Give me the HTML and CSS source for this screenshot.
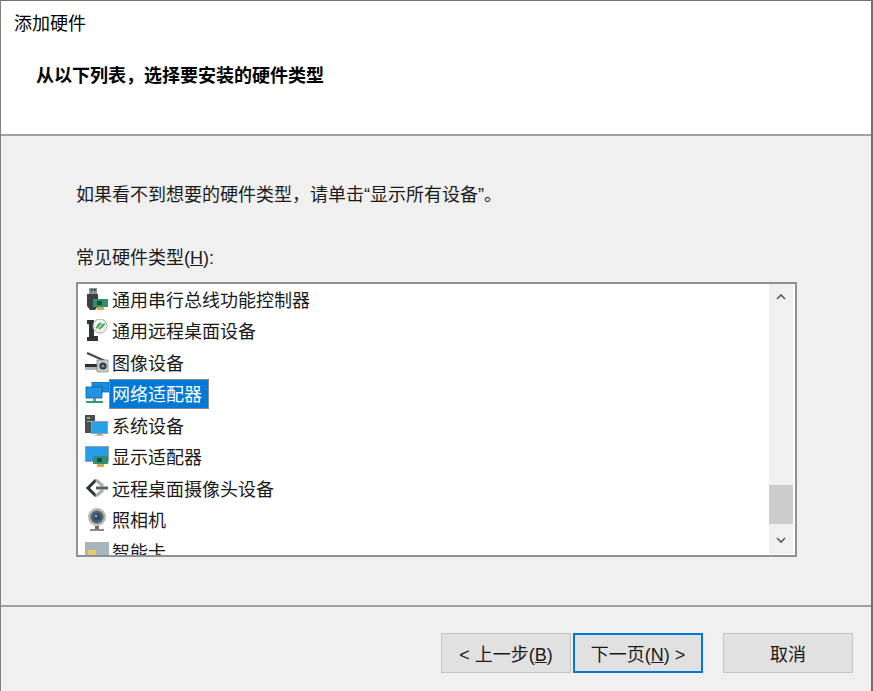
FILE: index.html
```html
<!DOCTYPE html>
<html lang="zh-CN">
<head>
    <meta charset="utf-8">
    <title>添加硬件</title>
    <link rel="stylesheet" href="styles.css">
</head>
<body>
    <div class="dialog">
        <div class="header">
            <div class="title">添加硬件</div>
            <div class="subtitle">从以下列表，选择要安装的硬件类型</div>
        </div>
        <div class="content">
            <p class="hint">如果看不到想要的硬件类型，请单击“显示所有设备”。</p>
            <p class="list-label">常见硬件类型(<u>H</u>):</p>
            <div class="listbox">
                <ul class="items">
                    <li class="item">
                        <svg class="icon" viewBox="0 0 24 24"><rect x="4" y="0" width="8" height="6" fill="#8c9294"/><rect x="6" y="1" width="1.5" height="2" fill="#333"/><rect x="9" y="1" width="1.5" height="2" fill="#333"/><path d="M2 6h11v12l-3 4H5l-3-4z" fill="#3b4042"/><rect x="8" y="11" width="15" height="8" fill="#2f8f70"/><rect x="12" y="13" width="5" height="4" fill="#14513f"/><rect x="12" y="19" width="7" height="3" fill="#e2a93a"/></svg>
                        <span class="name">通用串行总线功能控制器</span>
                    </li>
                    <li class="item">
                        <svg class="icon" viewBox="0 0 24 24"><path d="M2 1h7v16h4v5H2v-4h2V5H2z" fill="#2f3436"/><circle cx="15" cy="7" r="7" fill="#eef1ee" stroke="#a8adad"/><path d="M11 9l3-2-1-1 3-2M14 10l4-3-1-1 3-1" stroke="#3da24d" stroke-width="1.6" fill="none"/></svg>
                        <span class="name">通用远程桌面设备</span>
                    </li>
                    <li class="item">
                        <svg class="icon" viewBox="0 0 24 24"><path d="M2 2l18 8" stroke="#4a4a4a" stroke-width="2.4" fill="none"/><rect x="0" y="13" width="12" height="3" fill="#2f2f2f"/><rect x="0" y="16" width="12" height="3" fill="#b5b5b5"/><rect x="12" y="9" width="11" height="12" fill="#c9cccd" stroke="#777" stroke-width=".6"/><circle cx="18" cy="15" r="3.6" fill="#2d3a41"/><circle cx="18" cy="15" r="1.6" fill="#7f9cab"/></svg>
                        <span class="name">图像设备</span>
                    </li>
                    <li class="item">
                        <svg class="icon" viewBox="0 0 24 24"><rect x="7" y="0" width="17" height="10" fill="#1c8bdc" stroke="#0d5f9e" stroke-width=".8"/><rect x="1" y="5" width="16" height="11" fill="#1f93e6" stroke="#0d5f9e" stroke-width=".8"/><rect x="8" y="16" width="3" height="3" fill="#7d8b8b"/><rect x="1" y="19" width="17" height="2" fill="#2f9d78"/></svg>
                        <span class="name selected">网络适配器</span>
                    </li>
                    <li class="item">
                        <svg class="icon" viewBox="0 0 24 24"><rect x="0" y="1" width="10" height="18" fill="#4a4e50"/><rect x="2" y="3" width="3" height="2" fill="#72c24a"/><rect x="2" y="7" width="5" height="1" fill="#a5a8a8"/><rect x="6" y="7" width="17" height="13" fill="#8fa0a8"/><rect x="7" y="8" width="15" height="11" fill="#27a2e8"/><rect x="12" y="20" width="5" height="1" fill="#9a9a9a"/><rect x="10" y="21" width="9" height="1" fill="#c0c0c0"/></svg>
                        <span class="name">系统设备</span>
                    </li>
                    <li class="item">
                        <svg class="icon" viewBox="0 0 24 24"><rect x="0" y="1" width="24" height="16" fill="#8fa0a8"/><rect x="1" y="2" width="22" height="14" fill="#269de6"/><rect x="8" y="11" width="15" height="8" fill="#2f8f70"/><rect x="12" y="13" width="5" height="4" fill="#14513f"/><rect x="12" y="19" width="7" height="3" fill="#e2a93a"/></svg>
                        <span class="name">显示适配器</span>
                    </li>
                    <li class="item">
                        <svg class="icon" viewBox="0 0 24 24"><path d="M11 3l-8 8 8 8" stroke="#2f3436" stroke-width="3" fill="none"/><path d="M11 3l7 6M11 19l7-6" stroke="#a8adad" stroke-width="3" fill="none"/><path d="M11 11h12" stroke="#5a5f61" stroke-width="3" fill="none"/></svg>
                        <span class="name">远程桌面摄像头设备</span>
                    </li>
                    <li class="item">
                        <svg class="icon" viewBox="0 0 24 24"><circle cx="12" cy="9" r="9" fill="#b5b8b8"/><circle cx="12" cy="9" r="6.5" fill="#5b6063"/><circle cx="12" cy="9" r="3.5" fill="#1f4e78"/><circle cx="11" cy="8" r="1.2" fill="#8fb7d8"/><rect x="10" y="18" width="4" height="3" fill="#6a6a6a"/><rect x="5" y="21" width="14" height="2" fill="#8a8a8a"/></svg>
                        <span class="name">照相机</span>
                    </li>
                    <li class="item">
                        <svg class="icon" viewBox="0 0 24 24"><rect x="0" y="2" width="24" height="20" fill="#a7b6bc"/><rect x="3" y="10" width="8" height="10" fill="#efc85e"/></svg>
                        <span class="name">智能卡</span>
                    </li>
                </ul>
                <div class="scrollbar">
                    <svg class="arrow arrow-up" viewBox="0 0 10 6"><path d="M1 5l4-4 4 4" stroke="#555" stroke-width="1.6" fill="none"/></svg>
                    <div class="track"><div class="thumb"></div></div>
                    <svg class="arrow arrow-down" viewBox="0 0 10 6"><path d="M1 1l4 4 4-4" stroke="#555" stroke-width="1.6" fill="none"/></svg>
                </div>
            </div>
        </div>
        <div class="footer">
            <button class="btn" type="button">&lt; 上一步(<u>B</u>)</button>
            <button class="btn default" type="button">下一页(<u>N</u>) &gt;</button>
            <button class="btn cancel" type="button">取消</button>
        </div>
    </div>
</body>
</html>
```

FILE: styles.css
```css
html, body {
    margin: 0;
    height: 100%;
}

body {
    font-family: "Liberation Sans", "Noto Sans CJK SC", sans-serif;
    font-size: 18px;
    color: #1a1a1a;
    overflow: hidden;
}

.dialog {
    display: flex;
    flex-direction: column;
    height: 691px;
    box-sizing: border-box;
    border-top: 1px solid #707070;
    border-left: 1px solid #808080;
    border-right: 2px solid #707070;
    background-color: #f0f0f0;
}

.header {
    height: 135px;
    box-sizing: border-box;
    padding: 9px 0 0 13px;
    background-color: #fff;
    border-bottom: 2px solid #a0a0a0;
    color: #000;
}

.title {
    line-height: 28px;
}

.subtitle {
    margin: 24px 0 0 22px;
    line-height: 28px;
    font-weight: bold;
}

.content {
    height: 471px;
    box-sizing: border-box;
    padding: 45px 74px 0 75px;
    border-bottom: 2px solid #a0a0a0;
}

.hint,
.list-label {
    margin: 0;
    line-height: 28px;
}

.list-label {
    margin-top: 35px;
}

.listbox {
    display: flex;
    height: 275px;
    box-sizing: border-box;
    margin-top: 10px;
    border: 2px solid #8d9299;
    background-color: #fff;
}

.items {
    flex: 1;
    margin: 0;
    padding: 0;
    list-style: none;
    overflow: hidden;
}

.item {
    display: flex;
    align-items: center;
    height: 31.5px;
    padding-left: 7px;
}

.icon {
    width: 24px;
    height: 24px;
    flex: none;
}

.name {
    padding: 2px 7px 0 3px;
    line-height: 28px;
}

.selected {
    background-color: #0078d7;
    color: #fff;
    outline: 1px solid #8a8a8a;
    outline-offset: -1px;
}

.scrollbar {
    display: flex;
    flex-direction: column;
    width: 24px;
    margin: 0 2px 1px 0;
    background-color: #f0f0f0;
}

.arrow {
    width: 10px;
    height: 6px;
    flex: none;
    margin-left: 7px;
}

.arrow-up {
    margin-top: 10px;
    margin-bottom: 8px;
}

.arrow-down {
    margin-top: 7px;
    margin-bottom: 11px;
}

.track {
    display: flex;
    flex: 1;
    flex-direction: column;
    justify-content: flex-end;
}

.thumb {
    height: 39px;
    margin-bottom: 6px;
    background-color: #cdcdcd;
}

.footer {
    display: flex;
    align-items: flex-start;
    padding: 26px 18px 0 0;
    justify-content: flex-end;
    gap: 2px;
}

.btn {
    width: 130px;
    height: 40px;
    padding: 0 0 1px;
    font-family: inherit;
    font-size: 18px;
    color: #1a1a1a;
    background-color: #e1e1e1;
    border: 1px solid #c4c4c4;
}

.default {
    border: 2px solid #0078d7;
}

.cancel {
    margin-left: 18px;
}
```
